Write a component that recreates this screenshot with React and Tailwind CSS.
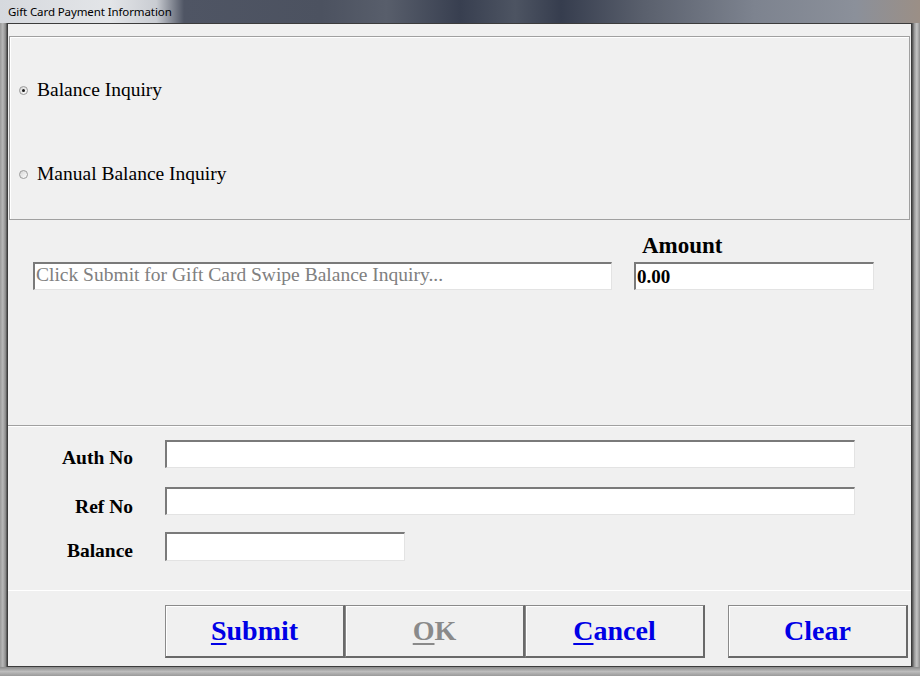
import { useState } from 'react';

const serif = "font-['Liberation_Serif','Times_New_Roman',serif]";

function Field({ className = '', children }) {
  return (
    <div
      className={`bg-white border-t-2 border-l-2 border-t-[#7a7a7a] border-l-[#7a7a7a] border-b border-r border-b-[#e3e3e3] border-r-[#e3e3e3] flex items-center pl-[1px] ${className}`}
    >
      {children}
    </div>
  );
}

function Radio({ checked, label, onClick }) {
  return (
    <div className="h-[28px] flex items-center cursor-default" onClick={onClick}>
      <span className="w-[9px] h-[9px] rounded-full border border-[#9a9a9a] bg-gradient-to-br from-[#d4d4d4] to-white flex items-center justify-center">
        {checked && <span className="w-[3px] h-[3px] rounded-full bg-[#1a1a1a]" />}
      </span>
      <span className={`ml-[9px] text-[19.5px] text-black ${serif}`}>{label}</span>
    </div>
  );
}

function Row({ label, pt, className, width }) {
  return (
    <div className={`flex items-start gap-[32px] h-[28px] ${className}`}>
      <div className={`w-[125px] ${pt} leading-[20px] text-right text-[19.5px] font-bold text-black ${serif}`}>{label}</div>
      <Field className={`${width} h-full`} />
    </div>
  );
}

function Btn({ first, rest, disabled, className = '' }) {
  return (
    <button
      className={`w-[180px] h-[53px] bg-[#f0f0f0] border-t border-l border-t-[#8a8a8a] border-l-[#8a8a8a] border-b-2 border-r-2 border-b-[#696969] border-r-[#696969] shadow-[inset_1px_1px_0_#ffffff] flex items-center justify-center text-[28px] font-bold ${serif} ${disabled ? 'text-[#8a8a8a]' : 'text-[#0000e6]'} ${className}`}
    >
      {first && <span className="underline underline-offset-[3px] decoration-[1.5px]">{first}</span>}
      {rest}
    </button>
  );
}

export default function App() {
  const [mode, setMode] = useState('balance');

  return (
    <div className="w-[920px] h-[676px] flex flex-col overflow-hidden bg-[#8f8f8f]">
      {/* title bar */}
      <div className="h-[23px] shrink-0 flex items-center pl-[8px] bg-[linear-gradient(to_right,#d6d9de_0%,#e3e5e8_12%,#c9ccd2_17%,#4f5564_20%,#4c5260_35%,#585e6b_42%,#383f50_50%,#4d5462_56%,#363d4e_61%,#5a606d_70%,#7d838f_82%,#8b909a_93%,#9b8f86_100%)]">
        <span className="text-[11.5px] tracking-[-0.1px] text-black font-['Noto_Sans','Open_Sans',sans-serif] leading-none">
          Gift Card Payment Information
        </span>
      </div>

      <div className="flex flex-1 min-h-0">
        <div className="w-[7px] shrink-0 bg-[linear-gradient(to_right,#9a9a9a,#b8b8b8_40%,#8a8a8a_80%,#4a4a4a)]" />

        <div className="flex-1 flex flex-col border border-[#3c3c3c] bg-[#f0f0f0]">
          {/* radio group */}
          <div className="mt-[12px] mx-[1px] h-[184px] border border-[#a0a0a0] shadow-[inset_1px_1px_0_#ffffff] flex flex-col pl-[9px] pt-[39px] gap-[56px]">
            <Radio checked={mode === 'balance'} label="Balance Inquiry" onClick={() => setMode('balance')} />
            <Radio checked={mode === 'manual'} label="Manual Balance Inquiry" onClick={() => setMode('manual')} />
          </div>

          {/* swipe / amount */}
          <div className="h-[206px] border-b border-[#a0a0a0] flex items-start pl-[25px] pt-[14px] gap-[22px]">
            <div className="w-[579px] pt-[28px]">
              <Field className="h-[28px] pb-[3px]">
                <span className={`text-[19.5px] text-[#808080] ${serif} leading-none`}>
                  Click Submit for Gift Card Swipe Balance Inquiry...
                </span>
              </Field>
            </div>
            <div className="w-[240px] flex flex-col">
              <div className={`h-[24px] pl-[8px] flex items-center text-[23px] font-bold text-black ${serif}`}>Amount</div>
              <Field className="h-[28px] mt-[4px] pb-[1px]">
                <span className={`text-[19px] font-bold text-black ${serif} leading-none`}>0.00</span>
              </Field>
            </div>
          </div>

          {/* auth fields */}
          <div className="h-[165px] border-t border-t-white border-b border-b-white flex flex-col pt-[13px]">
            <Row label="Auth No" pt="pt-[8px]" width="w-[690px]" />
            <Row label="Ref No" pt="pt-[10px]" width="w-[690px]" className="mt-[19px]" />
            <Row label="Balance" pt="pt-[9px]" width="w-[240px]" className="mt-[17px] h-[29px]" />
          </div>

          {/* buttons */}
          <div className="flex pl-[157px] pt-[14px]">
            <Btn first="S" rest="ubmit" />
            <Btn first="O" rest="K" disabled className="w-[179px]" />
            <Btn first="C" rest="ancel" />
            <Btn rest="Clear" className="ml-[23px]" />
          </div>
        </div>

        <div className="w-[8px] shrink-0 bg-[linear-gradient(to_right,#4a4a4a,#9a9a9a_30%,#c4c4c4_60%,#8a8a8a)]" />
      </div>

      <div className="h-[9px] shrink-0 bg-[linear-gradient(to_bottom,#8a8a8a,#bdbdbd_50%,#9a9a9a)]" />
    </div>
  );
}
